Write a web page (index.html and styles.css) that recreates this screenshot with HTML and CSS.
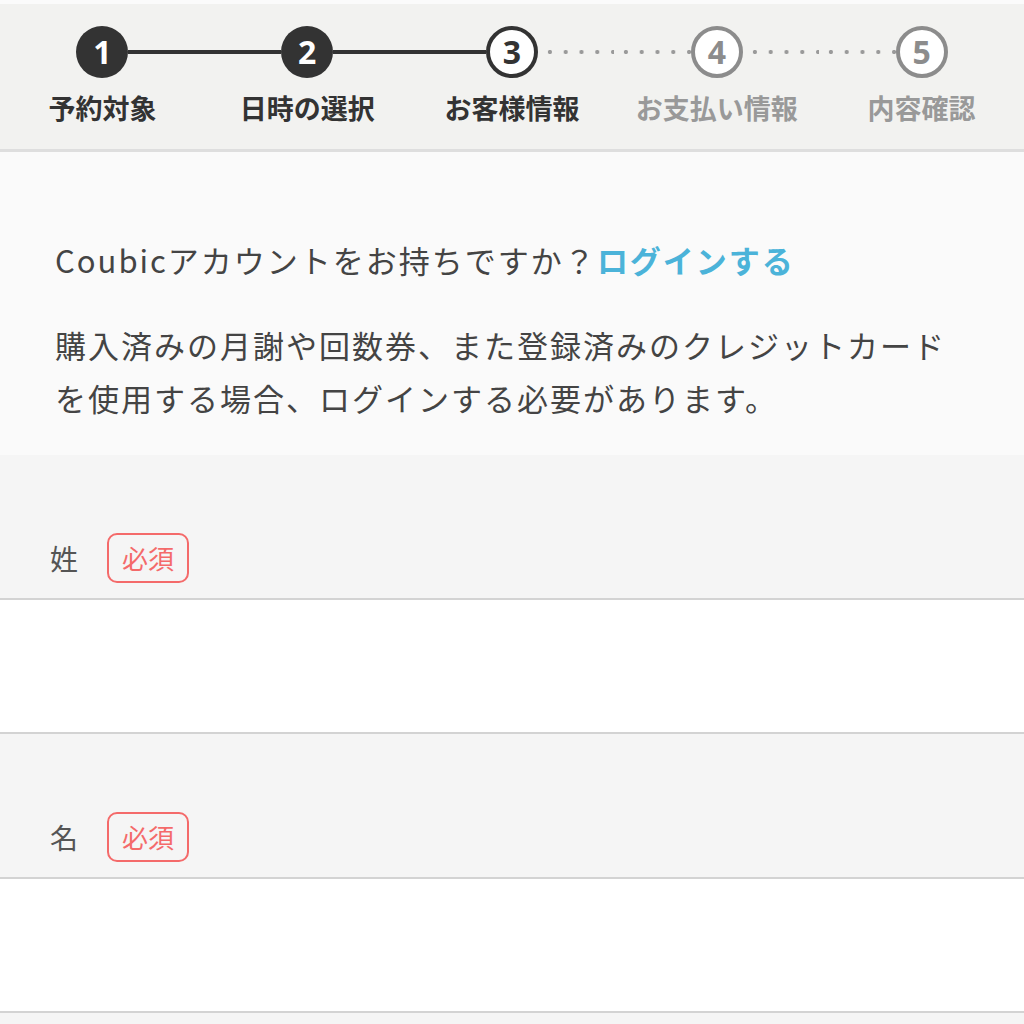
FILE: index.html
```html
<!DOCTYPE html>
<html lang="ja">
<head>
<meta charset="utf-8">
<title>お客様情報</title>
<link rel="stylesheet" href="styles.css">
</head>
<body>
<div class="page">
  <header class="steps">
    <div class="step done">
      <div class="track">
        <span class="conn none"></span>
        <span class="circle">1</span>
        <span class="conn solid"></span>
      </div>
      <div class="label">予約対象</div>
    </div>
    <div class="step done">
      <div class="track">
        <span class="conn solid"></span>
        <span class="circle">2</span>
        <span class="conn solid"></span>
      </div>
      <div class="label">日時の選択</div>
    </div>
    <div class="step current">
      <div class="track">
        <span class="conn solid"></span>
        <span class="circle">3</span>
        <span class="conn dotted"></span>
      </div>
      <div class="label">お客様情報</div>
    </div>
    <div class="step todo">
      <div class="track">
        <span class="conn dotted"></span>
        <span class="circle">4</span>
        <span class="conn dotted"></span>
      </div>
      <div class="label">お支払い情報</div>
    </div>
    <div class="step todo">
      <div class="track">
        <span class="conn dotted"></span>
        <span class="circle">5</span>
        <span class="conn none"></span>
      </div>
      <div class="label">内容確認</div>
    </div>
  </header>

  <section class="info">
    <p class="ask">Coubicアカウントをお持ちですか？<a class="login" href="#">ログインする</a></p>
    <p class="note">購入済みの月謝や回数券、また登録済みのクレジットカードを使用する場合、ログインする必要があります。</p>
  </section>

  <section class="form">
    <div class="field">
      <div class="field-label"><span class="name">姓</span><span class="badge">必須</span></div>
      <div class="input"></div>
    </div>
    <div class="field">
      <div class="field-label"><span class="name">名</span><span class="badge">必須</span></div>
      <div class="input"></div>
    </div>
  </section>
</div>
</body>
</html>
```

FILE: styles.css
```css
html, body {
  margin: 0;
  padding: 0;
  background: #f5f5f5;
}
body {
  font-family: "Noto Sans CJK JP", "Noto Sans", sans-serif;
  color: #444;
}
.page {
  border-top: 4px solid #fbfbfb;
}

/* steps header */
.steps {
  display: grid;
  grid-template-columns: repeat(5, 1fr);
  background: #f2f2f0;
  border-bottom: 3px solid #dedede;
  padding: 22px 0 23px;
}
.step {
  display: flex;
  flex-direction: column;
  align-items: stretch;
}
.track {
  display: flex;
  align-items: center;
  height: 52px;
}
.conn {
  flex: 1;
  height: 4px;
}
.conn.solid { background: #333; }
.conn.dotted {
  background-image: radial-gradient(circle, #9a9a9a 1.9px, transparent 2.3px);
  background-size: 15.8px 4px;
  background-position: 4px 0;
  background-repeat: repeat-x;
}
.circle {
  width: 52px;
  height: 52px;
  box-sizing: border-box;
  border-radius: 50%;
  display: flex;
  align-items: center;
  justify-content: center;
  font-family: "Noto Sans", "Open Sans", sans-serif;
  font-weight: 700;
  font-size: 32px;
  line-height: 1;
  flex: none;
}
.done .circle {
  background: #333;
  color: #fff;
}
.current .circle {
  background: #fff;
  border: 4px solid #333;
  color: #333;
}
.todo .circle {
  background: #fff;
  border: 4px solid #8c8c8c;
  color: #8c8c8c;
}
.label {
  margin-top: 12px;
  text-align: center;
  font-size: 27px;
  line-height: 36px;
  font-weight: 700;
  color: #333;
}
.todo .label { color: #999; }

/* info panel */
.info {
  background: #fafafa;
  padding: 81px 70px 31px 55px;
}
.info p {
  margin: 0;
  font-size: 31px;
  line-height: 53px;
  letter-spacing: 2px;
  color: #444;
}
.info .note {
  margin-top: 32px;
}
.login {
  color: #4bb3d9;
  font-weight: 700;
  text-decoration: none;
}

/* form */
.field-label {
  display: flex;
  align-items: center;
  padding: 78px 0 15px 50px;
  background: #f5f5f5;
}
.name {
  font-size: 28px;
  line-height: 50px;
  color: #555;
}
.badge {
  margin-left: 29px;
  height: 50px;
  box-sizing: border-box;
  padding: 0 13px;
  border: 2px solid #f46a6a;
  border-radius: 10px;
  color: #f46a6a;
  font-size: 26px;
  line-height: 45px;
}
.input {
  height: 132px;
  background: #fff;
  border-top: 2px solid #d3d3d3;
  border-bottom: 2px solid #d3d3d3;
}
```
